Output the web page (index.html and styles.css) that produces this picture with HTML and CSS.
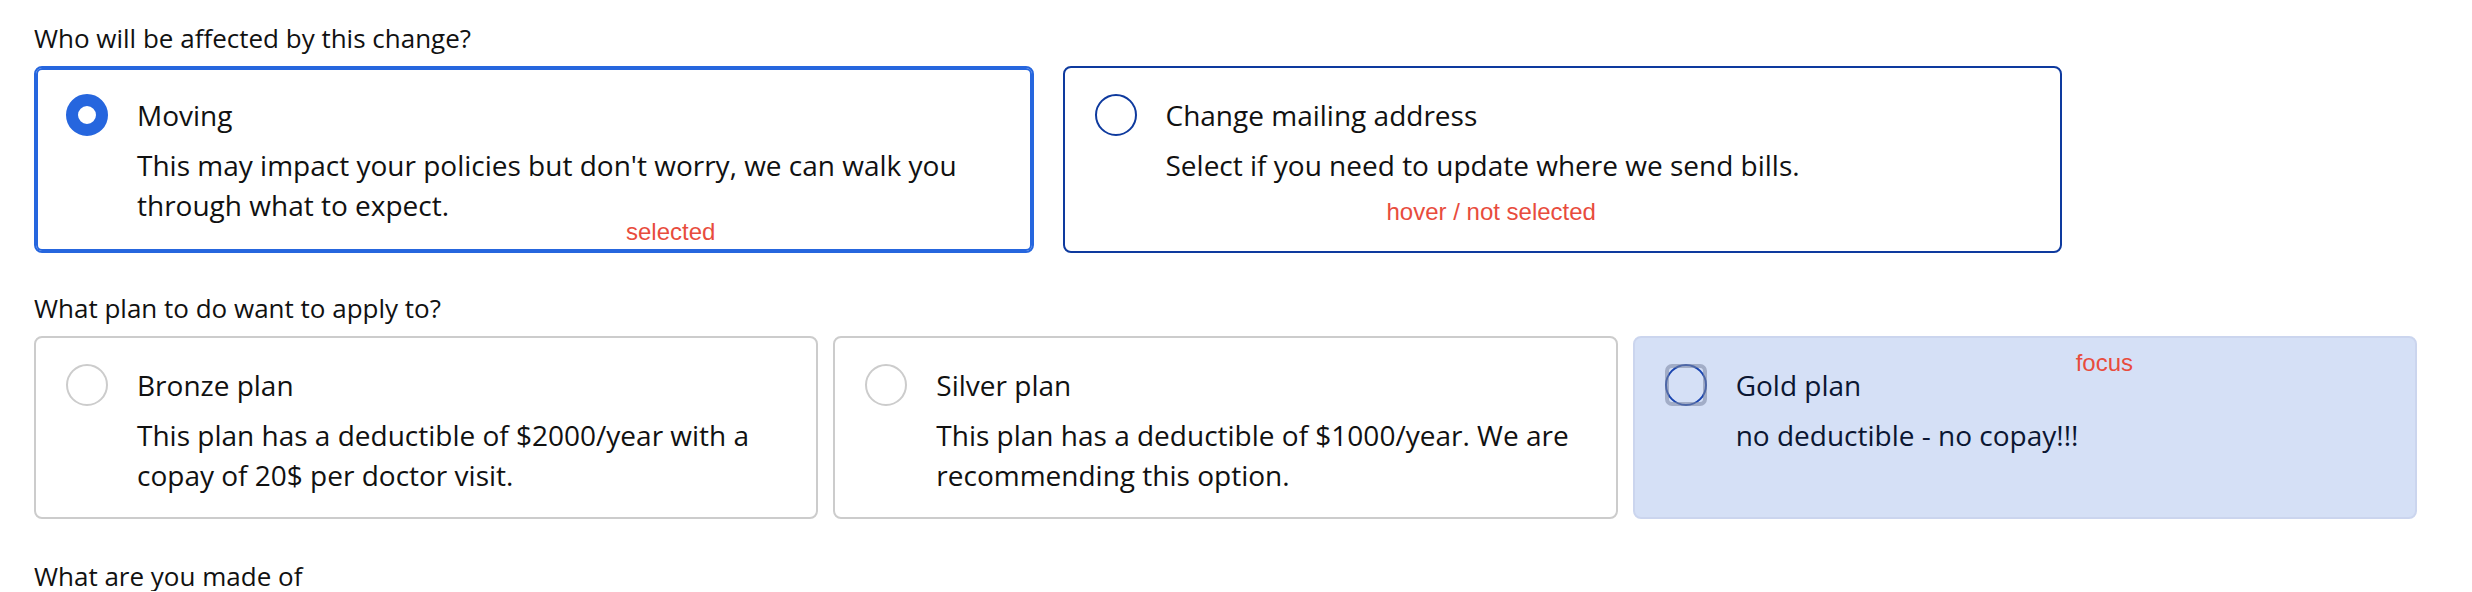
FILE: index.html
```html
<!DOCTYPE html>
<html lang="en">
<head>
<meta charset="utf-8">
<title>Radio cards</title>
<link rel="stylesheet" href="styles.css">
</head>
<body>
<main class="page">
  <section class="group group-who">
    <h2 class="legend">Who will be affected by this change?</h2>
    <div class="cards cards-two">
      <label class="card is-selected">
        <span class="radio radio-selected"></span>
        <span class="card-body">
          <span class="card-title">Moving</span>
          <span class="card-desc">This may impact your policies but don't worry, we can walk you through what to expect.</span>
        </span>
        <span class="note note-selected">selected</span>
      </label>
      <label class="card is-hover">
        <span class="radio radio-hover"></span>
        <span class="card-body">
          <span class="card-title">Change mailing address</span>
          <span class="card-desc">Select if you need to update where we send bills.</span>
        </span>
        <span class="note note-hover">hover / not selected</span>
      </label>
    </div>
  </section>

  <section class="group group-plan">
    <h2 class="legend">What plan to do want to apply to?</h2>
    <div class="cards cards-three">
      <label class="card">
        <span class="radio"></span>
        <span class="card-body">
          <span class="card-title">Bronze plan</span>
          <span class="card-desc">This plan has a deductible of $2000/year with a copay of 20$ per doctor visit.</span>
        </span>
      </label>
      <label class="card">
        <span class="radio"></span>
        <span class="card-body">
          <span class="card-title">Silver plan</span>
          <span class="card-desc">This plan has a deductible of $1000/year. We are recommending this option.</span>
        </span>
      </label>
      <label class="card is-focus">
        <span class="radio radio-focus"></span>
        <span class="card-body">
          <span class="card-title">Gold plan</span>
          <span class="card-desc">no deductible - no copay!!!</span>
        </span>
        <span class="note note-focus">focus</span>
      </label>
    </div>
  </section>

  <section class="group group-made">
    <h2 class="legend">What are you made of</h2>
  </section>
</main>
</body>
</html>
```

FILE: styles.css
```css
html, body {
  margin: 0;
  padding: 0;
  background: #ffffff;
}

body {
  font-family: "Open Sans", "Noto Sans", sans-serif;
  color: #111111;
}

.page {
  padding: 22px 0 0 34px;
  width: 2383px;
}

.legend {
  margin: 0;
  font-size: 26px;
  font-weight: 400;
  line-height: 32px;
  color: #111111;
}

.group-who .legend {
  margin-bottom: 12px;
}

.group-plan {
  margin-top: 39px;
}

.group-plan .legend {
  margin-bottom: 12px;
}

.group-made {
  margin-top: 42px;
}

.group-made .legend {
  line-height: 30px;
}

.cards {
  display: grid;
}

.cards-two {
  grid-template-columns: 1fr 1fr;
  column-gap: 29px;
  width: 2028px;
}

.cards-three {
  grid-template-columns: 1fr 1fr 1fr;
  column-gap: 15px;
}

.card {
  position: relative;
  display: flex;
  align-items: flex-start;
  gap: 29px;
  padding: 26px 30px 22px 30px;
  border: 2px solid #cccccc;
  border-radius: 8px;
  background: #ffffff;
}

.group-who .card {
  padding-bottom: 26px;
}

.card.is-selected {
  border-color: #2666de;
  box-shadow: inset 0 0 0 2px #2666de;
}

.card.is-hover {
  border-color: #0e3a9e;
}

.card.is-focus {
  background: #d5e0f6;
  border-color: #cbd5ee;
  color: #0b1632;
}

.radio {
  position: relative;
  flex: 0 0 auto;
  box-sizing: border-box;
  width: 42px;
  height: 42px;
  border: 2px solid #cccccc;
  border-radius: 50%;
  background: #ffffff;
}

.radio-selected {
  border: 12px solid #2666de;
}

.radio-hover {
  border-color: #0e3a9e;
}

.radio-focus {
  border-color: #1a45b0;
  background: transparent;
}

.radio-focus::after {
  content: "";
  position: absolute;
  inset: -2px;
  border: 4px solid rgba(120, 132, 160, 0.55);
  border-radius: 7px;
}

.card-body {
  display: flex;
  flex-direction: column;
  min-width: 0;
}

.card-title {
  font-size: 28px;
  line-height: 42px;
}

.card-desc {
  margin-top: 9px;
  font-size: 28px;
  line-height: 40px;
}

.note {
  position: absolute;
  font-family: "Liberation Sans", Arial, sans-serif;
  font-size: 24px;
  line-height: 24px;
  color: #e84c3d;
}

.note-selected {
  left: 590px;
  top: 152px;
}

.note-hover {
  left: 322px;
  top: 132px;
}

.note-focus {
  left: 441px;
  top: 13px;
}
```
